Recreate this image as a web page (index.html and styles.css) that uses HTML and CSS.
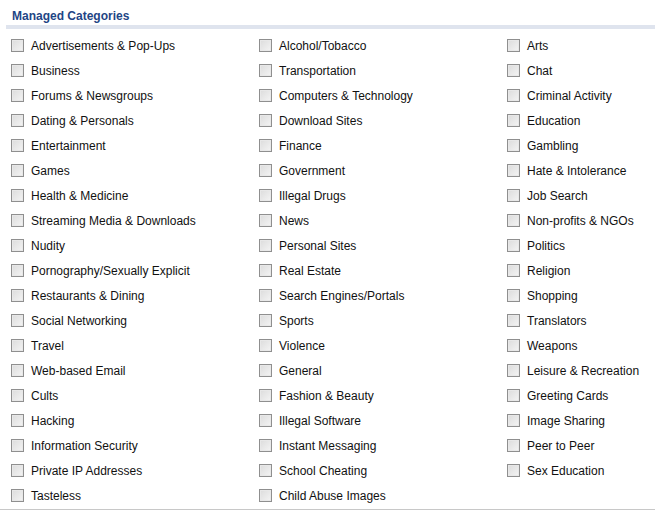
FILE: index.html
```html
<!DOCTYPE html>
<html>
<head>
<meta charset="utf-8">
<link rel="stylesheet" href="styles.css">
</head>
<body>
<div class="panel">
  <div class="title">Managed Categories</div>
  <div class="bar"></div>
  <div class="grid">
    <label class="item"><span class="cb"></span>Advertisements &amp; Pop-Ups</label>
    <label class="item"><span class="cb"></span>Alcohol/Tobacco</label>
    <label class="item"><span class="cb"></span>Arts</label>
    <label class="item"><span class="cb"></span>Business</label>
    <label class="item"><span class="cb"></span>Transportation</label>
    <label class="item"><span class="cb"></span>Chat</label>
    <label class="item"><span class="cb"></span>Forums &amp; Newsgroups</label>
    <label class="item"><span class="cb"></span>Computers &amp; Technology</label>
    <label class="item"><span class="cb"></span>Criminal Activity</label>
    <label class="item"><span class="cb"></span>Dating &amp; Personals</label>
    <label class="item"><span class="cb"></span>Download Sites</label>
    <label class="item"><span class="cb"></span>Education</label>
    <label class="item"><span class="cb"></span>Entertainment</label>
    <label class="item"><span class="cb"></span>Finance</label>
    <label class="item"><span class="cb"></span>Gambling</label>
    <label class="item"><span class="cb"></span>Games</label>
    <label class="item"><span class="cb"></span>Government</label>
    <label class="item"><span class="cb"></span>Hate &amp; Intolerance</label>
    <label class="item"><span class="cb"></span>Health &amp; Medicine</label>
    <label class="item"><span class="cb"></span>Illegal Drugs</label>
    <label class="item"><span class="cb"></span>Job Search</label>
    <label class="item"><span class="cb"></span>Streaming Media &amp; Downloads</label>
    <label class="item"><span class="cb"></span>News</label>
    <label class="item"><span class="cb"></span>Non-profits &amp; NGOs</label>
    <label class="item"><span class="cb"></span>Nudity</label>
    <label class="item"><span class="cb"></span>Personal Sites</label>
    <label class="item"><span class="cb"></span>Politics</label>
    <label class="item"><span class="cb"></span>Pornography/Sexually Explicit</label>
    <label class="item"><span class="cb"></span>Real Estate</label>
    <label class="item"><span class="cb"></span>Religion</label>
    <label class="item"><span class="cb"></span>Restaurants &amp; Dining</label>
    <label class="item"><span class="cb"></span>Search Engines/Portals</label>
    <label class="item"><span class="cb"></span>Shopping</label>
    <label class="item"><span class="cb"></span>Social Networking</label>
    <label class="item"><span class="cb"></span>Sports</label>
    <label class="item"><span class="cb"></span>Translators</label>
    <label class="item"><span class="cb"></span>Travel</label>
    <label class="item"><span class="cb"></span>Violence</label>
    <label class="item"><span class="cb"></span>Weapons</label>
    <label class="item"><span class="cb"></span>Web-based Email</label>
    <label class="item"><span class="cb"></span>General</label>
    <label class="item"><span class="cb"></span>Leisure &amp; Recreation</label>
    <label class="item"><span class="cb"></span>Cults</label>
    <label class="item"><span class="cb"></span>Fashion &amp; Beauty</label>
    <label class="item"><span class="cb"></span>Greeting Cards</label>
    <label class="item"><span class="cb"></span>Hacking</label>
    <label class="item"><span class="cb"></span>Illegal Software</label>
    <label class="item"><span class="cb"></span>Image Sharing</label>
    <label class="item"><span class="cb"></span>Information Security</label>
    <label class="item"><span class="cb"></span>Instant Messaging</label>
    <label class="item"><span class="cb"></span>Peer to Peer</label>
    <label class="item"><span class="cb"></span>Private IP Addresses</label>
    <label class="item"><span class="cb"></span>School Cheating</label>
    <label class="item"><span class="cb"></span>Sex Education</label>
    <label class="item"><span class="cb"></span>Tasteless</label>
    <label class="item"><span class="cb"></span>Child Abuse Images</label>
  </div>
</div>
</body>
</html>
```
FILE: styles.css
```css
html, body {
  margin: 0;
  padding: 0;
  background: #fff;
}
.panel {
  width: 655px;
  height: 510px;
  border-bottom: 1px solid #c8c8c8;
  font-family: "Liberation Sans", Arial, sans-serif;
  box-sizing: border-box;
}
.title {
  font-size: 12px;
  font-weight: bold;
  color: #1f4585;
  padding: 9px 0 0 12px;
  line-height: 14px;
}
.bar {
  margin: 2px 0 0 6px;
  height: 4px;
  background: #dfe4ee;
}
.grid {
  display: grid;
  grid-template-columns: 248px 248px 148px;
  grid-auto-rows: 25px;
  padding: 4px 0 0 11px;
}
.item {
  display: flex;
  align-items: center;
  font-size: 12px;
  color: #111;
  white-space: nowrap;
}
.cb {
  width: 11px;
  height: 11px;
  border: 1px solid #8f8f8f;
  background: linear-gradient(135deg, #dcdcdc 0%, #f4f4f4 100%);
  box-shadow: inset 0 0 0 1px #e8e8e8;
  margin-right: 7px;
  flex: none;
}
```
